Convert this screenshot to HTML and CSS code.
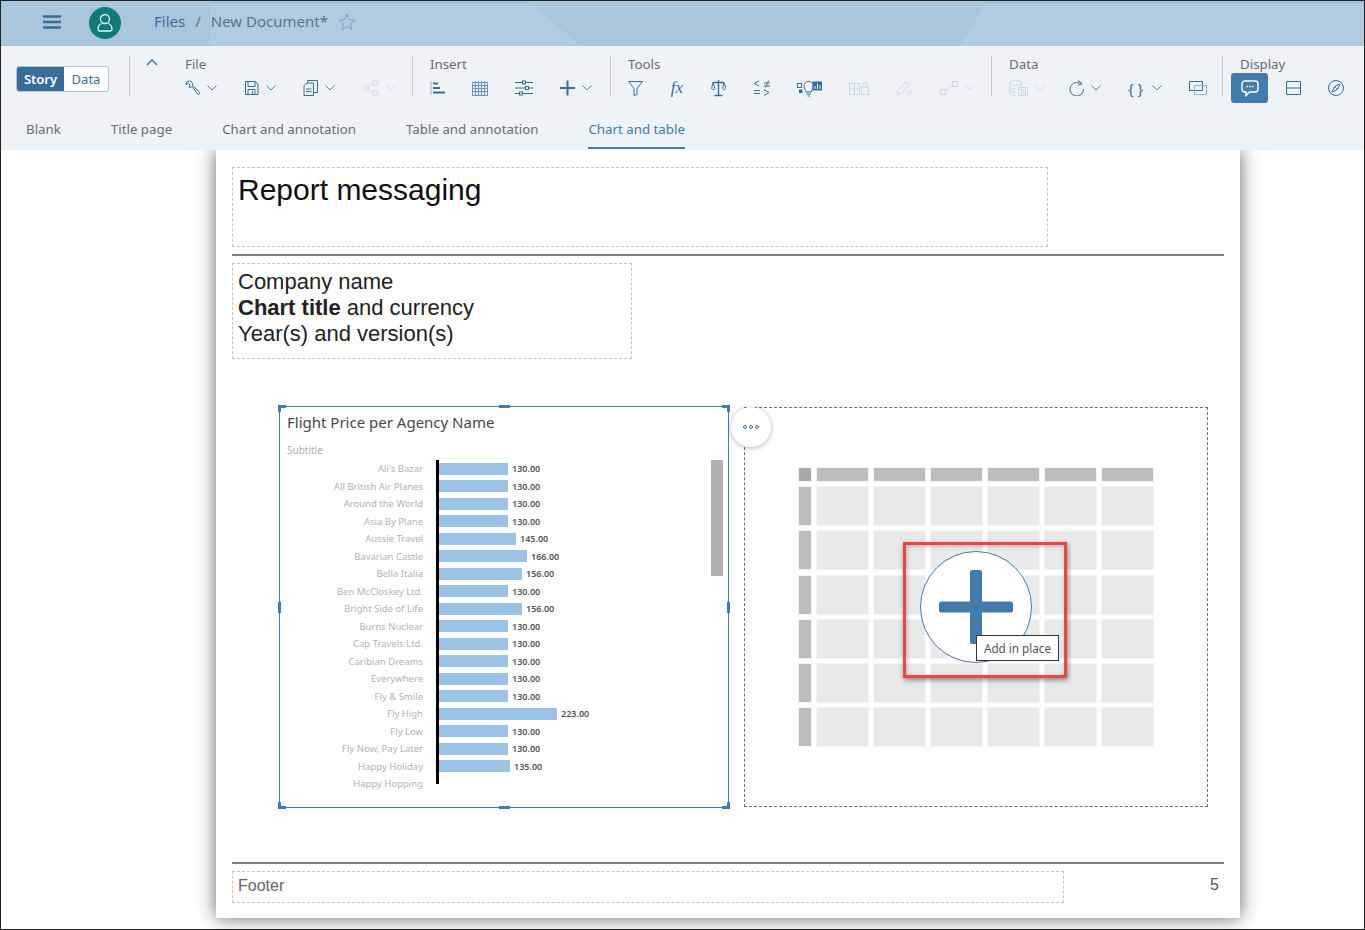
FILE: index.html
```html
<!DOCTYPE html>
<html lang="en">
<head>
    <meta charset="UTF-8">
    <title>New Document</title>
    <link rel="stylesheet" href="styles.css">
</head>
<body>
<div class="app">
    <header class="shell">
        <svg class="burger" width="18" height="14" viewBox="0 0 18 14"><path d="M0 1.500h18M0 7h18M0 12.500h18"/></svg>
        <div class="avatar">
            <svg width="18" height="20" viewBox="0 0 18 20"><circle cx="9" cy="6" r="4.500"/><path d="M5.500 10.500C3 11.500 2 13.500 2 16.500c0 1 .5 1.500 1.500 1.500h11c1 0 1.500-.5 1.500-1.500 0-3-1-5-3.500-6"/></svg>
        </div>
        <nav class="crumbs">
            <a class="crumb-link">Files</a>
            <span class="crumb-sep">/</span>
            <span class="crumb-doc">New Document*</span>
        </nav>
        <svg class="star" width="18" height="17" viewBox="0 0 18 17"><path d="M9 1l2.200 5.600 5.800.4-4.500 3.700 1.500 5.800L9 13.300l-5 3.200 1.500-5.800L1 7l5.800-.4z"/></svg>
    </header>

    <section class="ribbon">
        <div class="toolbar">
            <div class="seg">
                <span class="seg-on">Story</span>
                <span class="seg-off">Data</span>
            </div>
            <div class="group g-file">
                <svg class="collapse" width="12" height="7" viewBox="0 0 12 7"><path d="M1 6l5-5 5 5"/></svg>
                <div class="group-label">File</div>
                <div class="tools">
                    <span class="tool">
                        <svg class="ico" width="15" height="16" viewBox="0 0 15 16"><path d="M4.500 1A3.600 3.600 0 0 0 1 4.500l2.500-1 1.500 1.500-1 2.500a3.600 3.600 0 0 0 3-1l5.500 7.500a1.400 1.400 0 0 0 2-2L7.500 5.500A3.600 3.600 0 0 0 4.500 1z"/></svg>
                        <svg class="chev" width="10" height="6" viewBox="0 0 10 6"><path d="M.5.5L5 5 9.500.5"/></svg>
                    </span>
                    <span class="tool">
                        <svg class="ico" width="15" height="16" viewBox="0 0 15 16"><path d="M1.500 1.500h10l2.500 2.500v10.500h-12.500z"/><path d="M4 1.500v5h7v-5M4 14.500v-5h7v5M8.500 11v3.500" /></svg>
                        <svg class="chev" width="10" height="6" viewBox="0 0 10 6"><path d="M.5.5L5 5 9.500.5"/></svg>
                    </span>
                    <span class="tool">
                        <svg class="ico" width="15" height="16" viewBox="0 0 15 16"><path d="M1 5.500L4 3h6.500v12.500H1zM4.500 3V.5h10v12h-4M3 9h5.500M3 11.500h5.500"/></svg>
                        <svg class="chev" width="10" height="6" viewBox="0 0 10 6"><path d="M.5.5L5 5 9.500.5"/></svg>
                    </span>
                    <span class="tool off">
                        <svg class="ico" width="17" height="16" viewBox="0 0 17 16"><circle cx="3.500" cy="8" r="2.500"/><circle cx="13" cy="3" r="2.500"/><circle cx="13" cy="13" r="2.500"/><path d="M5.800 7L10.800 4M5.800 9L10.800 12"/></svg>
                        <svg class="chev" width="10" height="6" viewBox="0 0 10 6"><path d="M.5.5L5 5 9.500.5"/></svg>
                    </span>
                </div>
            </div>
            <div class="group g-insert">
                <div class="group-label">Insert</div>
                <div class="tools">
                    <span class="tool">
                        <svg class="ico" width="15" height="16" viewBox="0 0 15 16"><path class="pale" d="M1 1v14"/><path class="thick" d="M3 3.500h5M3 8h7M3 12.500h12"/></svg>
                    </span>
                    <span class="tool">
                        <svg class="ico grid-ico" width="16" height="16" viewBox="0 0 16 16"><path d="M.5 2.500h15v13H.5zM.5 5.500h15M.5 8.500h15M.5 11.500h15M3.500 1v14.500M6.500 1v14.500M9.500 1v14.500M12.500 1v14.500"/></svg>
                    </span>
                    <span class="tool">
                        <svg class="ico" width="18" height="16" viewBox="0 0 18 16"><path d="M0 2.500h7M11 2.500h7M0 8h10M14 8h4M0 13.500h4M8 13.500h10"/><rect x="7.500" y="1" width="3" height="3"/><rect x="10.500" y="6.500" width="3" height="3"/><rect x="4.500" y="12" width="3" height="3"/></svg>
                    </span>
                    <span class="tool">
                        <svg class="ico" width="15" height="16" viewBox="0 0 15 16"><path class="thick" d="M0 8h15M7.500 .5v15"/></svg>
                        <svg class="chev" width="10" height="6" viewBox="0 0 10 6"><path d="M.5.5L5 5 9.500.5"/></svg>
                    </span>
                </div>
            </div>
            <div class="group g-tools">
                <div class="group-label">Tools</div>
                <div class="tools">
                    <span class="tool">
                        <svg class="ico" width="15" height="16" viewBox="0 0 15 16"><path d="M.5 1.500h14L9 8.500v6l-3 1V8.500z"/></svg>
                    </span>
                    <span class="tool"><i class="fx">fx</i></span>
                    <span class="tool">
                        <svg class="ico" width="15" height="18" viewBox="0 0 15 18"><path class="mid" d="M7.500 1v15M3.500 16.500h8M2 3.500h11"/><path d="M2 3.500L.5 9.500a2 2 0 0 0 3.500 0zM13 3.500l-1.500 6a2 2 0 0 0 3.500 0z"/></svg>
                    </span>
                    <span class="tool">
                        <svg class="ico" width="17" height="16" viewBox="0 0 17 16"><path d="M6 1L1 3.500 6 6M1 10.500h6M1 13.500h6M11 9.500l5 3-5 3M11 3h6M11 6h6M15.500 .5l-3 7"/></svg>
                    </span>
                    <span class="tool">
                        <svg class="ico" width="25" height="18" viewBox="0 0 25 18"><rect x=".5" y="4.500" width="4" height="4"/><rect class="dot" x="2.500" y="11" width="2.500" height="2.500"/><path d="M9 13c0-2-2-3-2-6a4.700 4.700 0 0 1 9.400 0c0 3-2 4-2 6zM9.500 15h4.500M10.500 17h2.500"/><rect class="dot" x="16" y="3" width="9" height="8"/><path class="bars" d="M18 10V7M20.500 10V4.500M23 10V6"/></svg>
                    </span>
                    <span class="tool off">
                        <svg class="ico" width="20" height="16" viewBox="0 0 20 16"><path d="M.5 3.500h10v11H.5zM.5 9h10M5.500 3.500v11"/><rect x="12.500" y="7" width="7" height="7.500"/><path d="M14 7V4.500a2 2 0 0 1 4 0V7"/></svg>
                    </span>
                    <span class="tool off">
                        <svg class="ico" width="17" height="16" viewBox="0 0 17 16"><path d="M1 15l1-4.500L10 2l3 3-8 8.500zM11 10l5 5M16 10l-5 5"/></svg>
                    </span>
                    <span class="tool off">
                        <svg class="ico" width="18" height="16" viewBox="0 0 18 16"><rect x=".5" y="9.500" width="5" height="5"/><rect x="12.500" y="1.500" width="5" height="5"/><path d="M5.500 10.500l7-6"/></svg>
                        <svg class="chev" width="10" height="6" viewBox="0 0 10 6"><path d="M.5.5L5 5 9.500.5"/></svg>
                    </span>
                </div>
            </div>
            <div class="group g-data">
                <div class="group-label">Data</div>
                <div class="tools">
                    <span class="tool off tight">
                        <svg class="ico" width="19" height="16" viewBox="0 0 19 16"><ellipse cx="6.500" cy="3" rx="6" ry="2.500"/><path d="M.5 3v10c0 1.500 3 2.500 6 2.500M12.500 3v4M.5 6.500c0 1.500 3 2.500 6 2.500M.5 10c0 1.500 3 2.500 6 2.500"/><rect x="9.500" y="7.500" width="9" height="8"/><path d="M11.500 7.500v3h5v-3M12.500 15.500v-3h4v3"/></svg>
                        <svg class="chev" width="10" height="6" viewBox="0 0 10 6"><path d="M.5.5L5 5 9.500.5"/></svg>
                    </span>
                    <span class="tool">
                        <svg class="ico" width="15" height="16" viewBox="0 0 15 16"><path d="M13 5a6.800 6.800 0 1 0 1.500 4M9 .5l3.500 2.500L9 5.500"/></svg>
                        <svg class="chev" width="10" height="6" viewBox="0 0 10 6"><path d="M.5.5L5 5 9.500.5"/></svg>
                    </span>
                    <span class="tool">
                        <span class="braces">{ }</span>
                        <svg class="chev" width="10" height="6" viewBox="0 0 10 6"><path d="M.5.5L5 5 9.500.5"/></svg>
                    </span>
                    <span class="tool">
                        <svg class="ico" width="18" height="14" viewBox="0 0 18 14"><path d="M.5 .5h13v9H.5z"/><path class="pale" d="M5.500 4.500h12v9h-12z"/></svg>
                    </span>
                </div>
            </div>
            <div class="group g-display">
                <div class="group-label">Display</div>
                <div class="tools">
                    <span class="tool tool-on">
                        <svg width="18" height="17" viewBox="0 0 18 17"><path class="bubble" d="M4 1h10a3 3 0 0 1 3 3v5a3 3 0 0 1-3 3H8.500L5 15.500V12H4a3 3 0 0 1-3-3V4a3 3 0 0 1 3-3z"/><path class="bubble-dots" d="M5.500 6.500h1.500M8.200 6.500h1.500M11 6.500h1.500"/></svg>
                    </span>
                    <span class="tool">
                        <svg class="ico" width="15" height="14" viewBox="0 0 15 14"><path d="M.5.500h14v13H.5zM.5 7h14"/></svg>
                    </span>
                    <span class="tool compass">
                        <svg class="ico" width="16" height="16" viewBox="0 0 16 16"><circle cx="8" cy="8" r="7.500"/><path d="M12 4L9.500 9.500 4 12l2.500-5.500zM6.500 6.500l3 3"/></svg>
                    </span>
                </div>
            </div>
        </div>
        <nav class="tabs">
            <a class="tab">Blank</a>
            <a class="tab">Title page</a>
            <a class="tab">Chart and annotation</a>
            <a class="tab">Table and annotation</a>
            <a class="tab tab-active">Chart and table</a>
        </nav>
    </section>

    <main class="canvas">
        <article class="sheet">
            <div class="box box-message">Report messaging</div>
            <hr class="rule">
            <div class="box box-company">Company name<br><b>Chart title</b> and currency<br>Year(s) and version(s)</div>

            <div class="widgets">
                <div class="chart">
                    <span class="grip grip-tl"></span><span class="grip grip-t"></span><span class="grip grip-tr"></span>
                    <span class="grip grip-l"></span><span class="grip grip-r"></span>
                    <span class="grip grip-bl"></span><span class="grip grip-b"></span><span class="grip grip-br"></span>
                    <div class="chart-title">Flight Price per Agency Name</div>
                    <div class="chart-sub">Subtitle</div>
                    <div class="plot">
                        <div class="axis"></div>
                        <div class="scroll"></div>
                        <div class="row"><span class="name">Ali's Bazar</span><span class="bar" style="width:69px"></span><span class="val">130.00</span></div>
                        <div class="row"><span class="name">All British Air Planes</span><span class="bar" style="width:69px"></span><span class="val">130.00</span></div>
                        <div class="row"><span class="name">Around the World</span><span class="bar" style="width:69px"></span><span class="val">130.00</span></div>
                        <div class="row"><span class="name">Asia By Plane</span><span class="bar" style="width:69px"></span><span class="val">130.00</span></div>
                        <div class="row"><span class="name">Aussie Travel</span><span class="bar" style="width:77px"></span><span class="val">145.00</span></div>
                        <div class="row"><span class="name">Bavarian Castle</span><span class="bar" style="width:88px"></span><span class="val">166.00</span></div>
                        <div class="row"><span class="name">Bella Italia</span><span class="bar" style="width:83px"></span><span class="val">156.00</span></div>
                        <div class="row"><span class="name">Ben McCloskey Ltd.</span><span class="bar" style="width:69px"></span><span class="val">130.00</span></div>
                        <div class="row"><span class="name">Bright Side of Life</span><span class="bar" style="width:83px"></span><span class="val">156.00</span></div>
                        <div class="row"><span class="name">Burns Nuclear</span><span class="bar" style="width:69px"></span><span class="val">130.00</span></div>
                        <div class="row"><span class="name">Cap Travels Ltd.</span><span class="bar" style="width:69px"></span><span class="val">130.00</span></div>
                        <div class="row"><span class="name">Caribian Dreams</span><span class="bar" style="width:69px"></span><span class="val">130.00</span></div>
                        <div class="row"><span class="name">Everywhere</span><span class="bar" style="width:69px"></span><span class="val">130.00</span></div>
                        <div class="row"><span class="name">Fly &amp; Smile</span><span class="bar" style="width:69px"></span><span class="val">130.00</span></div>
                        <div class="row"><span class="name">Fly High</span><span class="bar" style="width:118px"></span><span class="val">223.00</span></div>
                        <div class="row"><span class="name">Fly Low</span><span class="bar" style="width:69px"></span><span class="val">130.00</span></div>
                        <div class="row"><span class="name">Fly Now, Pay Later</span><span class="bar" style="width:69px"></span><span class="val">130.00</span></div>
                        <div class="row"><span class="name">Happy Holiday</span><span class="bar" style="width:71px"></span><span class="val">135.00</span></div>
                        <div class="row"><span class="name">Happy Hopping</span></div>
                    </div>
                </div>

                <div class="holder">
                    <div class="more"><span></span><span></span><span></span></div>
                    <div class="grid">
                        <i class="c-corner"></i><i class="c-head"></i><i class="c-head"></i><i class="c-head"></i><i class="c-head"></i><i class="c-head"></i><i class="c-head"></i>
                        <i class="c-side"></i><i></i><i></i><i></i><i></i><i></i><i></i>
                        <i class="c-side"></i><i></i><i></i><i></i><i></i><i></i><i></i>
                        <i class="c-side"></i><i></i><i></i><i></i><i></i><i></i><i></i>
                        <i class="c-side"></i><i></i><i></i><i></i><i></i><i></i><i></i>
                        <i class="c-side"></i><i></i><i></i><i></i><i></i><i></i><i></i>
                        <i class="c-side"></i><i></i><i></i><i></i><i></i><i></i><i></i>
                    </div>
                    <div class="add">
                        <svg width="74" height="74" viewBox="0 0 74 74"><rect x="31" y="0" width="12" height="74" rx="2"/><rect x="0" y="31.500" width="74" height="11" rx="2"/></svg>
                    </div>
                    <div class="callout"></div>
                    <div class="tip">Add in place</div>
                </div>
            </div>

            <hr class="rule rule-foot">
            <div class="foot">
                <div class="box box-footer">Footer</div>
                <span class="page-no">5</span>
            </div>
        </article>
    </main>
</div>
</body>
</html>
```

FILE: styles.css
```css
* {
    box-sizing: border-box;
}
body {
    margin: 0;
    font-family: "Noto Sans", Arial, sans-serif;
    background-color: #fff;
}
.app {
    width: 1365px;
    height: 930px;
    border: 1px solid #222;
    overflow: hidden;
    display: flex;
    flex-direction: column;
}

/* shell bar */
.shell {
    position: relative;
    height: 45px;
    flex: none;
    display: flex;
    align-items: center;
    padding-left: 42px;
    padding-bottom: 2px;
    background: linear-gradient(#9dbbd6, #b1cbe2 4px);
}
.shell::before {
    content: "";
    position: absolute;
    inset: 0;
    background: #aac6dd;
    clip-path: polygon(0 0, 210px 0, 210px 100%, 0 100%);
}
.shell::after {
    content: "";
    position: absolute;
    inset: 0;
    background: #aac6dd;
    clip-path: polygon(528px 0, 986px 0, 959px 100%, 579px 100%);
}
.shell > * {
    position: relative;
    z-index: 1;
}
.burger {
    margin-bottom: 2px;
}
.burger path {
    stroke: #3a6c98;
    stroke-width: 2.4;
    fill: none;
}
.avatar {
    width: 32px;
    height: 32px;
    margin-left: 28px;
    border-radius: 50%;
    background-color: #0f7d75;
    display: flex;
    align-items: center;
    justify-content: center;
}
.avatar path, .avatar circle {
    fill: none;
    stroke: #e8f4f2;
    stroke-width: 1.3;
}
.crumbs {
    margin-left: 33px;
    margin-bottom: 4px;
    display: flex;
    align-items: center;
    font-size: 15px;
}
.crumb-link {
    color: #41699a;
}
.crumb-sep {
    color: #5a6f85;
    margin: 0 10px;
}
.crumb-doc {
    color: #5f7284;
}
.star {
    margin-left: 10px;
    margin-bottom: 2px;
}
.star path {
    fill: none;
    stroke: #7fa0c0;
}

/* ribbon */
.ribbon {
    position: relative;
    z-index: 2;
    height: 104px;
    flex: none;
    background-color: #eef3f8;
    padding-top: 10px;
}
.toolbar {
    display: flex;
    padding-left: 15px;
    height: 40px;
}
.seg {
    width: 93px;
    height: 26px;
    margin-top: 10px;
    margin-right: 20px;
    display: flex;
    font-size: 13px;
    line-height: 24px;
    border: 1px solid #b8c4cf;
    border-radius: 3px;
    text-align: center;
    overflow: hidden;
    background-color: #fff;
}
.seg-on {
    width: 47px;
    background-color: #3a6c98;
    color: #fff;
    font-weight: 600;
}
.seg-off {
    flex: 1;
    color: #3a6c98;
}
.group {
    position: relative;
    border-left: 1px solid #c6ccd2;
    padding-left: 17px;
}
.g-file {
    width: 283px;
    padding-left: 55px;
}
.g-insert {
    width: 198px;
}
.g-tools {
    width: 381px;
}
.g-data {
    width: 231px;
}
.g-display {
    width: 130px;
}
.collapse {
    position: absolute;
    left: 16px;
    top: 3px;
}
.collapse path {
    fill: none;
    stroke: #3a6c98;
    stroke-width: 1.3;
}
.group-label {
    font-size: 13.3px;
    line-height: 16px;
    color: #6a6d70;
}
.tools {
    display: flex;
    align-items: center;
    gap: 27px;
    height: 16px;
    margin-top: 8px;
}
.tool {
    display: flex;
    align-items: center;
    gap: 7px;
    color: #3a6c98;
}
.tool.off {
    color: #ccd8e4;
}
.tool.tight {
    margin-right: -3px;
}
.ico {
    fill: none;
    stroke: currentColor;
    stroke-width: 1;
    display: block;
}
.ico .pale {
    stroke: #8fb0cd;
}
.ico .mid {
    stroke-width: 1.4;
}
.ico .thick {
    stroke-width: 2;
}
.ico .dot {
    fill: currentColor;
}
.ico .bars {
    stroke: #eef3f8;
}
.grid-ico {
    stroke: #6a94b9;
}
.chev {
    display: block;
    fill: none;
    stroke: currentColor;
    opacity: .85;
}
.fx {
    width: 14px;
    text-align: center;
    font-family: "Liberation Serif", serif;
    font-size: 17px;
    line-height: 16px;
}
.braces {
    width: 17px;
    white-space: nowrap;
    font-size: 15px;
    line-height: 16px;
}
.g-display .tools {
    gap: 18px;
    margin-left: -9px;
}
.tool-on {
    width: 37px;
    height: 30px;
    border-radius: 3px;
    background-color: #427cac;
    justify-content: center;
}
.bubble {
    fill: none;
    stroke: #fff;
    stroke-width: 1.4;
}
.bubble-dots {
    stroke: #fff;
    stroke-width: 1.6;
}
.compass {
    margin-left: 9px;
}
.tabs {
    display: flex;
    gap: 50px;
    padding-left: 25px;
    margin-top: 18px;
}
.tab {
    font-size: 13.3px;
    line-height: 30px;
    padding-bottom: 3px;
    height: 35px;
    color: #6a6d70;
}
.tab-active {
    color: #427cac;
    border-bottom: 2px solid #427cac;
}

/* report page */
.canvas {
    flex: 1;
    min-height: 0;
    padding-left: 215px;
    background-color: #fff;
}
.sheet {
    width: 1024px;
    height: 768px;
    padding: 17px 16px 0;
    background-color: #fff;
    box-shadow: 0 0 18px rgba(0, 0, 0, .6);
    font-family: "Liberation Sans", Arial, sans-serif;
}
.box {
    border: 1px dashed #c4c4c4;
    padding: 0 5px;
    color: #222;
}
.box-message {
    width: 816px;
    height: 80px;
    font-size: 30px;
    line-height: 44px;
    color: #111;
}
.rule {
    height: 2px;
    margin: 7px 0;
    border: 0;
    background-color: #808080;
}
.box-company {
    width: 400px;
    height: 96px;
    padding-top: 5px;
    font-size: 22px;
    line-height: 26px;
}
.widgets {
    display: flex;
    align-items: flex-start;
    gap: 15px;
    margin-top: 47px;
    padding-left: 47px;
    font-family: "Noto Sans", Arial, sans-serif;
}

/* chart */
.chart {
    position: relative;
    width: 450px;
    height: 402px;
    border: 1px solid #427cac;
    padding: 4px 7px 0;
}
.grip {
    position: absolute;
    background-color: #427cac;
}
.grip-tl, .grip-tr, .grip-bl, .grip-br {
    width: 8px;
    height: 7px;
    background-color: transparent;
    border: 0 solid #427cac;
}
.grip-tl { left: -2px; top: -2px; border-width: 3px 0 0 3px; }
.grip-tr { right: -2px; top: -2px; border-width: 3px 3px 0 0; }
.grip-bl { left: -2px; bottom: -2px; border-width: 0 0 3px 3px; }
.grip-br { right: -2px; bottom: -2px; border-width: 0 3px 3px 0; }
.grip-t, .grip-b {
    width: 11px;
    height: 3px;
    left: 219px;
}
.grip-t { top: -2px; }
.grip-b { bottom: -2px; }
.grip-l, .grip-r {
    width: 3px;
    height: 11px;
    top: 195px;
}
.grip-l { left: -2px; }
.grip-r { right: -2px; }
.chart-title {
    font-size: 15px;
    line-height: 22px;
    color: #484848;
}
.chart-sub {
    margin-top: 10px;
    font-size: 10px;
    line-height: 14px;
    color: #b0b0b0;
}
.plot {
    position: relative;
    margin-top: 3px;
}
.axis {
    position: absolute;
    left: 149px;
    top: 0;
    width: 3px;
    height: 324px;
    background-color: #000;
}
.scroll {
    position: absolute;
    left: 424px;
    top: 0;
    width: 12px;
    height: 116px;
    background-color: #b0b0b0;
}
.row {
    display: flex;
    align-items: center;
    height: 17.5px;
}
.name {
    width: 136px;
    margin-right: 16px;
    text-align: right;
    white-space: nowrap;
    font-size: 9.5px;
    color: #b3b3b3;
}
.bar {
    height: 12px;
    background-color: #9cc2e6;
}
.val {
    margin-left: 4px;
    font-size: 9px;
    font-weight: 600;
    color: #555;
}

/* table placeholder */
.holder {
    position: relative;
    width: 464px;
    height: 400px;
    margin-top: 1px;
    border: 1px dashed #427cac;
    display: flex;
    align-items: center;
    justify-content: center;
}
.more {
    position: absolute;
    left: -14px;
    top: -1px;
    width: 40px;
    height: 40px;
    border-radius: 50%;
    background-color: #fff;
    box-shadow: 0 1px 5px rgba(0, 0, 0, .3);
    display: flex;
    align-items: center;
    justify-content: center;
    gap: 2px;
}
.more span {
    width: 4px;
    height: 4px;
    border: 1px solid #3a6c98;
    border-radius: 50%;
}
.grid {
    display: grid;
    grid-template-columns: 12px repeat(6, 51px);
    grid-template-rows: 13px repeat(6, 38px);
    column-gap: 6px;
    row-gap: 6.2px;
}
.grid i {
    background-color: #e8e9e9;
    box-shadow: 0 0 0 1px #f4f4f4;
}
.grid .c-corner {
    background-color: #a5a9ac;
}
.grid .c-head, .grid .c-side {
    background-color: #bcbdbe;
}
.add {
    position: absolute;
    left: 175px;
    top: 143px;
    width: 112px;
    height: 112px;
    border: 1px solid #427cac;
    border-radius: 50%;
    background-color: #fff;
    display: flex;
    align-items: center;
    justify-content: center;
}
.add rect {
    fill: #427cac;
}
.callout {
    position: absolute;
    left: 158px;
    top: 134px;
    width: 164px;
    height: 136px;
    border: 3px solid #f04444;
    box-shadow: 1px 2px 5px rgba(0, 0, 0, .45), inset 1px 1px 4px rgba(0, 0, 0, .25);
}
.tip {
    position: absolute;
    left: 231px;
    top: 227px;
    width: 83px;
    height: 26px;
    border: 1px solid #333;
    background-color: #fff;
    color: #555;
    font-size: 11.7px;
    line-height: 24px;
    text-align: center;
}

/* footer */
.rule-foot {
    margin-top: 54px;
}
.foot {
    display: flex;
    justify-content: space-between;
    align-items: center;
}
.box-footer {
    width: 832px;
    height: 32px;
    font-size: 16px;
    line-height: 28px;
    color: #666;
}
.page-no {
    padding-right: 5px;
    margin-bottom: 4px;
    font-size: 16px;
    color: #555;
}
```
